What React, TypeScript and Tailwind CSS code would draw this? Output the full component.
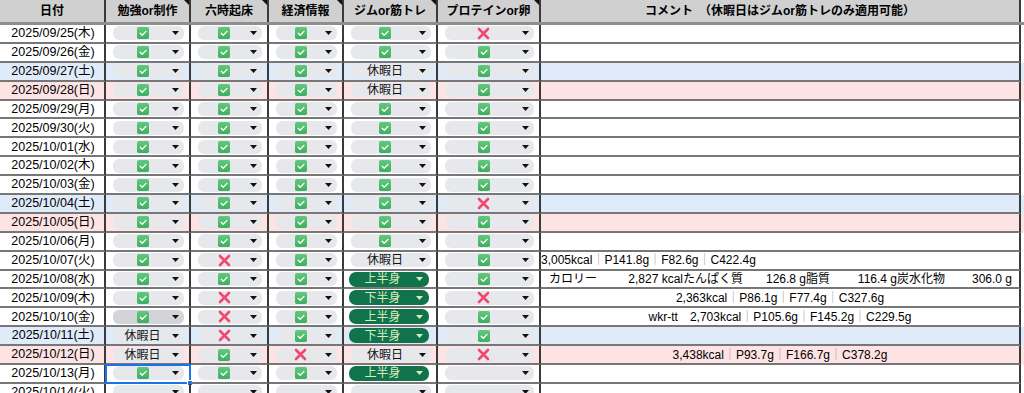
import React from "react";

type V = "c" | "x" | "h" | "u" | "d" | "e";
type Bg = "w" | "b" | "p";

const FONT = "font-['Liberation_Sans','Noto_Sans_CJK_JP',sans-serif]";

const Caret = ({ color }: { color: string }) => (
  <svg width="7" height="4" viewBox="0 0 7 4" className="shrink-0">
    <path d="M0 0h7L3.5 4z" fill={color} />
  </svg>
);

const Check = () => (
  <svg width="12" height="12" viewBox="0 0 12 12">
    <defs>
      <linearGradient id="cg" x1="0" y1="0" x2="0" y2="1">
        <stop offset="0" stopColor="#62c97e" />
        <stop offset="1" stopColor="#3fae5f" />
      </linearGradient>
    </defs>
    <rect width="12" height="12" rx="1.8" fill="url(#cg)" />
    <path d="M3.2 6.2l2 2L9 4.4" stroke="#fff" strokeWidth="1.3" fill="none" strokeLinecap="round" strokeLinejoin="round" />
  </svg>
);

const Cross = () => (
  <svg width="13" height="13" viewBox="0 0 13 13">
    <path d="M2 2L11 11M11 2L2 11" stroke="#f2476f" strokeWidth="2.6" strokeLinecap="round" />
  </svg>
);

function Pill({ v, hover }: { v: V; hover?: boolean }) {
  if (v === "u" || v === "d") {
    return (
      <div className="flex h-[15px] w-full items-center rounded-[7px] bg-[#11734b] -ml-[2px]">
        <div className="flex flex-1 justify-center text-[12px] leading-none text-[#d4edbc]">
          {v === "u" ? "上半身" : "下半身"}
        </div>
        <div className="mr-[6px]">
          <Caret color="#d4edbc" />
        </div>
      </div>
    );
  }
  return (
    <div
      className={`flex h-[14px] w-full items-center rounded-[6px] ${
        hover ? "bg-[#d3d4d7]" : "bg-[#e7e8eb]"
      }`}
    >
      <div className="flex flex-1 items-center justify-center text-[12px] leading-none text-[#111]">
        {v === "c" && <Check />}
        {v === "x" && <Cross />}
        {v === "h" && "休暇日"}
      </div>
      <div className="mr-[5px]">
        <Caret color="#111" />
      </div>
    </div>
  );
}

const Sep = () => <span className="text-[#9a9a9a]">｜</span>;

function Macro({ parts, prefix }: { parts: string[]; prefix?: string }) {
  return (
    <span className="whitespace-nowrap">
      {prefix && <span>{prefix}　</span>}
      {parts.map((p, i) => (
        <React.Fragment key={i}>
          {i > 0 && <Sep />}
          {p}
        </React.Fragment>
      ))}
    </span>
  );
}

const Seg = ({ w, l, r }: { w: string; l: string; r: string }) => (
  <div className={`flex justify-between ${w}`}>
    <span>{l}</span>
    <span>{r}</span>
  </div>
);

type Row = { d: string; v: V[]; bg: Bg; c?: React.ReactNode; align?: "l" | "c"; sel?: boolean; hover?: boolean };

const rows: Row[] = [
  { d: "2025/09/25(木)", v: ["c", "c", "c", "c", "x"], bg: "w" },
  { d: "2025/09/26(金)", v: ["c", "c", "c", "c", "c"], bg: "w" },
  { d: "2025/09/27(土)", v: ["c", "c", "c", "h", "c"], bg: "b" },
  { d: "2025/09/28(日)", v: ["c", "c", "c", "h", "c"], bg: "p" },
  { d: "2025/09/29(月)", v: ["c", "c", "c", "c", "c"], bg: "w" },
  { d: "2025/09/30(火)", v: ["c", "c", "c", "c", "c"], bg: "w" },
  { d: "2025/10/01(水)", v: ["c", "c", "c", "c", "c"], bg: "w" },
  { d: "2025/10/02(木)", v: ["c", "c", "c", "c", "c"], bg: "w" },
  { d: "2025/10/03(金)", v: ["c", "c", "c", "c", "c"], bg: "w" },
  { d: "2025/10/04(土)", v: ["c", "c", "c", "c", "x"], bg: "b" },
  { d: "2025/10/05(日)", v: ["c", "c", "c", "c", "c"], bg: "p" },
  { d: "2025/10/06(月)", v: ["c", "c", "c", "c", "c"], bg: "w" },
  {
    d: "2025/10/07(火)",
    v: ["c", "x", "c", "h", "c"],
    bg: "w",
    align: "l",
    c: <Macro parts={["3,005kcal", "P141.8g", "F82.6g", "C422.4g"]} />,
  },
  {
    d: "2025/10/08(水)",
    v: ["c", "c", "c", "u", "c"],
    bg: "w",
    align: "l",
    c: (
      <div className="flex pl-[8px]">
        <Seg w="w-[134px]" l="カロリー" r="2,827 kcal" />
        <Seg w="w-[123px]" l="たんぱく質" r="126.8 g" />
        <Seg w="w-[91px]" l="脂質" r="116.4 g" />
        <Seg w="w-[115px]" l="炭水化物" r="306.0 g" />
      </div>
    ),
  },
  {
    d: "2025/10/09(木)",
    v: ["c", "x", "c", "d", "x"],
    bg: "w",
    c: <Macro parts={["2,363kcal", "P86.1g", "F77.4g", "C327.6g"]} />,
  },
  {
    d: "2025/10/10(金)",
    v: ["c", "x", "c", "u", "c"],
    bg: "w",
    hover: true,
    c: <Macro prefix="wkr-tt" parts={["2,703kcal", "P105.6g", "F145.2g", "C229.5g"]} />,
  },
  { d: "2025/10/11(土)", v: ["h", "x", "c", "d", "c"], bg: "b" },
  {
    d: "2025/10/12(日)",
    v: ["h", "c", "x", "h", "x"],
    bg: "p",
    c: <Macro parts={["3,438kcal", "P93.7g", "F166.7g", "C378.2g"]} />,
  },
  { d: "2025/10/13(月)", v: ["c", "c", "c", "u", "e"], bg: "w", sel: true },
  { d: "2025/10/14(火)", v: ["e", "e", "e", "e", "e"], bg: "w" },
];

const COLS = "grid grid-cols-[106px_85px_78px_75px_94px_103px_480px]";
const bgCls: Record<Bg, string> = { w: "bg-white", b: "bg-[#dfebf9]", p: "bg-[#fde3e3]" };

const Corner = () => (
  <svg width="5" height="5" viewBox="0 0 5 5" className="absolute right-0 top-0">
    <path d="M0 0h5v5z" fill="#111" />
  </svg>
);

export default function App() {
  const headers = ["日付", "勉強or制作", "六時起床", "経済情報", "ジムor筋トレ", "プロテインor卵", "コメント　（休暇日はジムor筋トレのみ適用可能）"];
  return (
    <div className={`h-[393px] w-[1024px] overflow-hidden bg-white text-black ${FONT}`}>
      <div className={`${COLS} h-[25px] border-b-[3px] border-[#8e8e8e]`}>
        {headers.map((h, i) => (
          <div
            key={i}
            className="relative flex items-center justify-center border-r-2 border-[#3a3a3a] bg-[#d0d0d0] text-[12px] font-bold"
          >
            {h}
            {i >= 1 && i <= 5 && <Corner />}
          </div>
        ))}
      </div>
      {rows.map((r, ri) => (
        <div key={ri} className={`${COLS} h-[18.9px] ${bgCls[r.bg]}`}>
          <div className="flex items-center justify-center border-b-2 border-r-2 border-b-[#777] border-r-[#3a3a3a] pl-[2px] text-[12.5px] leading-none">
            {r.d}
          </div>
          {r.v.map((v, vi) => (
            <div
              key={vi}
              className="relative flex items-center border-b-2 border-r-2 border-b-[#777] border-r-[#3a3a3a] pl-[7px] pr-[5px]"
            >
              <Pill v={v} hover={r.hover && vi === 0} />
              {r.sel && vi === 0 && (
                <div className="pointer-events-none absolute -bottom-[2px] -left-[1px] -right-[2px] -top-[1px] border-2 border-[#1a73e8]">
                  <div className="absolute -bottom-[4px] -right-[4px] h-[6px] w-[6px] border border-white bg-[#1a73e8]" />
                </div>
              )}
            </div>
          ))}
          <div
            className={`flex items-center overflow-hidden border-b-2 border-r-2 border-b-[#777] border-r-[#3a3a3a] text-[12px] leading-none ${
              r.align === "l" ? "justify-start" : "justify-center"
            }`}
          >
            {r.c}
          </div>
        </div>
      ))}
    </div>
  );
}
